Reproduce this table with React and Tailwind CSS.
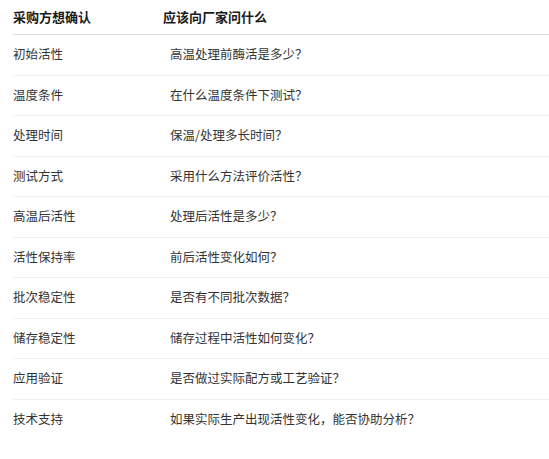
import React from 'react';

const rows = [
  ['初始活性', '高温处理前酶活是多少？'],
  ['温度条件', '在什么温度条件下测试？'],
  ['处理时间', '保温/处理多长时间？'],
  ['测试方式', '采用什么方法评价活性？'],
  ['高温后活性', '处理后活性是多少？'],
  ['活性保持率', '前后活性变化如何？'],
  ['批次稳定性', '是否有不同批次数据？'],
  ['储存稳定性', '储存过程中活性如何变化？'],
  ['应用验证', '是否做过实际配方或工艺验证？'],
  ['技术支持', '如果实际生产出现活性变化，能否协助分析？'],
];

export default function App() {
  return (
    <div
      className="w-[549px] h-[459px] bg-white pl-[13px] overflow-hidden"
      style={{ fontFamily: '"Noto Sans CJK SC", "Noto Sans", sans-serif' }}
    >
      {/* Header */}
      <div className="flex items-center h-[35px] pb-[1px] border-b border-[#dcdcdc] text-[13px] font-semibold text-[#1a1a1a]">
        <div className="w-[150px]">采购方想确认</div>
        <div className="flex-1">应该向厂家问什么</div>
      </div>

      {/* Body */}
      {rows.map(([a, b], i) => (
        <div
          key={a}
          className={
            'flex items-center h-[40.5px] text-[12.5px] text-[#333333] ' +
            (i < rows.length - 1 ? 'border-b border-[#efefef]' : '')
          }
        >
          <div className="w-[157px]">{a}</div>
          <div className="flex-1">{b}</div>
        </div>
      ))}
    </div>
  );
}
